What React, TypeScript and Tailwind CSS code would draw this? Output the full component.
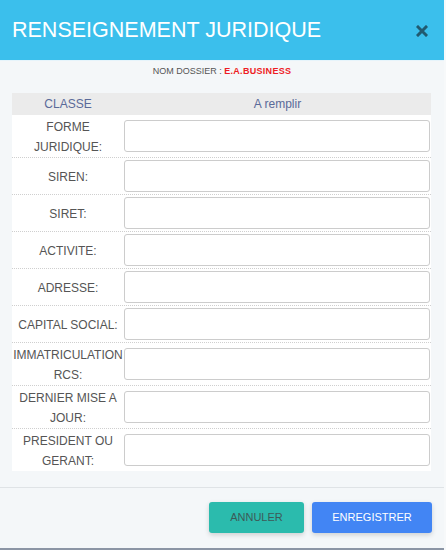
const rows: string[][] = [
  ['FORME', 'JURIDIQUE:'],
  ['SIREN:'],
  ['SIRET:'],
  ['ACTIVITE:'],
  ['ADRESSE:'],
  ['CAPITAL SOCIAL:'],
  ['IMMATRICULATION', 'RCS:'],
  ['DERNIER MISE A', 'JOUR:'],
  ['PRESIDENT OU', 'GERANT:'],
]

export default function App() {
  return (
    <div className="w-[446px] h-[550px] bg-[#f7f9fa] font-['Liberation_Sans',Arial,sans-serif]">
      <div className="w-[444px] h-[550px] flex flex-col bg-[#f4f7f9] border-b-2 border-[#8b95a5]">
        <header className="h-[61px] shrink-0 flex items-center justify-between bg-[#3bbfec] pl-3 pr-[16px] border-b border-[#e6f4fb]">
          <h1 className="text-white text-[21.5px] leading-none pt-[1px]">RENSEIGNEMENT JURIDIQUE</h1>
          <svg width="12" height="12" viewBox="0 0 12 12" className="mt-[1px]">
            <path d="M2 2L10 10M10 2L2 10" stroke="#215a70" strokeWidth="3" strokeLinecap="square" />
          </svg>
        </header>

        <div className="flex-1 px-3">
          <div className="pt-[5px] text-center text-[9px] leading-[10px] text-[#555]">
            NOM DOSSIER : <span className="font-bold text-[#ee1c25] tracking-[0.3px]">E.A.BUSINESS</span>
          </div>

          <div className="mt-[17px] w-[419px]">
            <div className="flex h-[22px] items-center bg-[#ebebeb] text-[12px] text-[#5a6a99]">
              <div className="w-[112px] text-center">CLASSE</div>
              <div className="flex-1 text-center">A remplir</div>
            </div>
            {rows.map((label, i) => (
              <div
                key={i}
                className={`flex items-center bg-white ${i < rows.length - 1 ? 'border-b border-dotted border-[#cfcfcf]' : ''}`}
              >
                <div className="w-[112px] pt-[3px] text-center text-[12px] leading-[19.5px] text-[#555]">
                  {label.map((l) => (
                    <div key={l}>{l}</div>
                  ))}
                </div>
                <div className="flex-1 py-[2px] pr-px">
                  <input className="block w-full h-[32px] rounded-[3px] border border-[#cccccc] bg-white" />
                </div>
              </div>
            ))}
          </div>
        </div>

        <footer className="h-[61px] shrink-0 flex items-center justify-end gap-2 pr-3 pb-[1px] border-t border-[#dfe3e6]">
          <button className="w-[95px] h-[31px] rounded-[3px] bg-[#2bbbad] text-[11px] text-[#3d5a58] shadow-[0_2px_5px_rgba(0,0,0,0.16)]">
            ANNULER
          </button>
          <button className="w-[120px] h-[31px] rounded-[3px] bg-[#4285f4] text-[11px] text-white shadow-[0_2px_5px_rgba(0,0,0,0.16)]">
            ENREGISTRER
          </button>
        </footer>
      </div>
    </div>
  )
}
